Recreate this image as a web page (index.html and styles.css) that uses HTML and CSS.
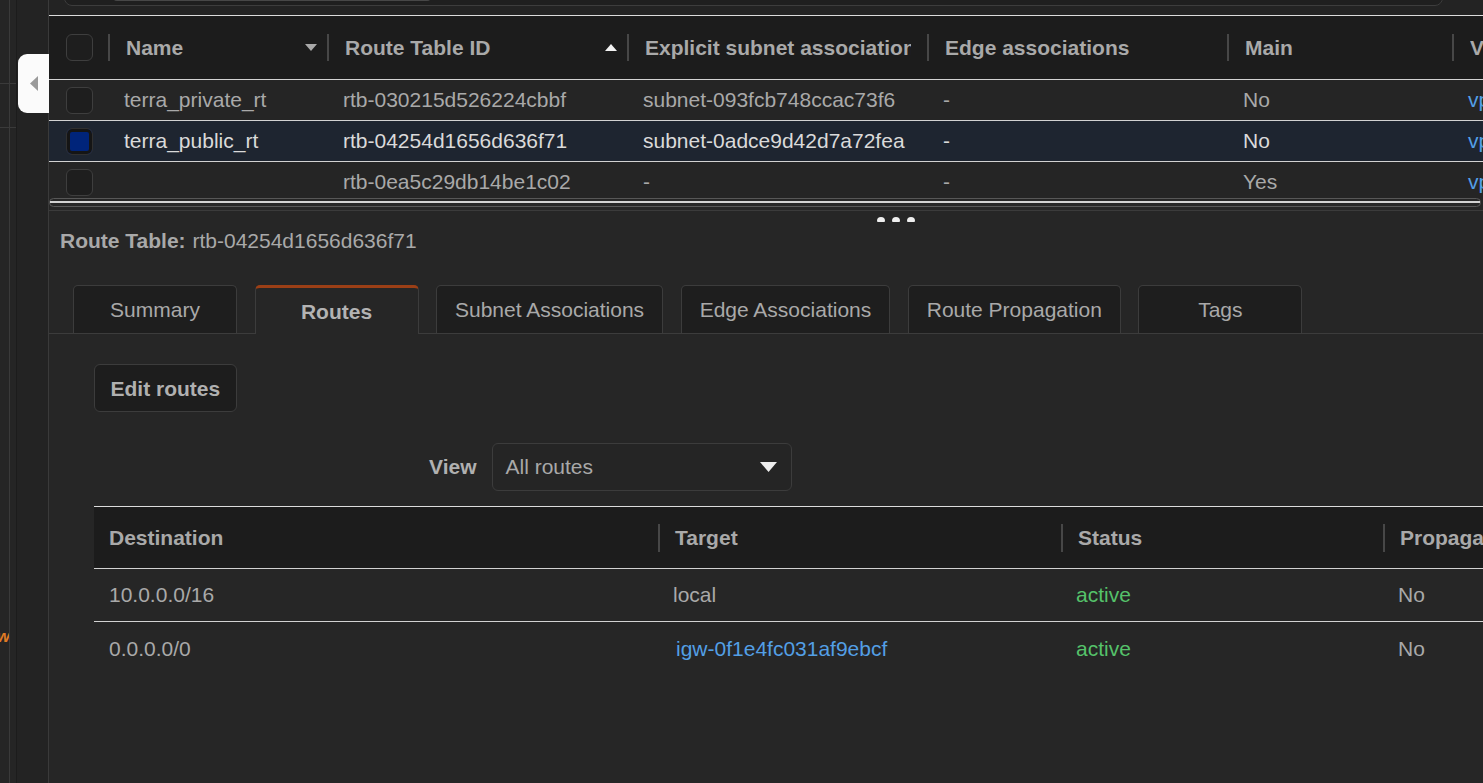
FILE: index.html
```html
<!DOCTYPE html>
<html lang="en">
<head>
<meta charset="utf-8">
<title>Route Tables</title>
<link rel="stylesheet" href="styles.css">
</head>
<body>
<div class="app">
  <aside class="sidebar">
    <div class="side-col">
      <div class="side-seg seg-a"></div>
      <div class="side-seg seg-b"></div>
      <div class="side-new"><span>New</span></div>
    </div>
    <div class="side-rest"></div>
  </aside>
  <button class="collapse" aria-label="Collapse">
    <svg width="8" height="15" viewBox="0 0 8 15"><polygon points="8,0 8,15 0,7.5" fill="#9a9a9a"/></svg>
  </button>

  <main class="main">
    <div class="filter-area">
      <div class="filter-box"><div class="filter-inner"></div></div>
    </div>

    <div class="grid-wrap">
      <div class="g-row g-head">
        <div class="gcheck"><span class="cb"></span></div>
        <div class="gh sep"><span class="lbl">Name</span>
          <svg class="sort" width="12" height="7" viewBox="0 0 12 7"><polygon points="0,0 12,0 6,7" fill="#a9a9a9"/></svg>
        </div>
        <div class="gh sep"><span class="lbl">Route Table ID</span>
          <svg class="sort" width="12" height="7" viewBox="0 0 12 7"><polygon points="0,7 12,7 6,0" fill="#f2f2f2"/></svg>
        </div>
        <div class="gh sep clip"><span class="lbl">Explicit subnet association</span></div>
        <div class="gh sep"><span class="lbl">Edge associations</span></div>
        <div class="gh sep"><span class="lbl">Main</span></div>
        <div class="gh sep"><span class="lbl">VPC</span></div>
      </div>
      <div class="g-row">
        <div class="gcheck"><span class="cb"></span></div>
        <div class="gc">terra_private_rt</div>
        <div class="gc">rtb-030215d526224cbbf</div>
        <div class="gc">subnet-093fcb748ccac73f6</div>
        <div class="gc">-</div>
        <div class="gc">No</div>
        <div class="gc link">vpc-0d1a27c54b3e9f810</div>
      </div>
      <div class="g-row selected">
        <div class="gcheck"><span class="cb on"></span></div>
        <div class="gc">terra_public_rt</div>
        <div class="gc">rtb-04254d1656d636f71</div>
        <div class="gc">subnet-0adce9d42d7a72fea</div>
        <div class="gc">-</div>
        <div class="gc">No</div>
        <div class="gc link">vpc-0d1a27c54b3e9f810</div>
      </div>
      <div class="g-row">
        <div class="gcheck"><span class="cb"></span></div>
        <div class="gc"></div>
        <div class="gc">rtb-0ea5c29db14be1c02</div>
        <div class="gc">-</div>
        <div class="gc">-</div>
        <div class="gc">Yes</div>
        <div class="gc link">vpc-0d1a27c54b3e9f810</div>
      </div>
    </div>
    <div class="hscroll"><div class="thumb"></div></div>

    <div class="splitter"><span class="dot"></span><span class="dot"></span><span class="dot"></span></div>

    <section class="detail">
      <div class="rt-title"><b>Route Table:</b> rtb-04254d1656d636f71</div>

      <div class="tabs">
        <div class="tab">Summary</div>
        <div class="tab active">Routes</div>
        <div class="tab">Subnet Associations</div>
        <div class="tab">Edge Associations</div>
        <div class="tab">Route Propagation</div>
        <div class="tab">Tags</div>
      </div>

      <div class="tab-body">
        <button class="btn">Edit routes</button>

        <div class="view-row">
          <span class="view-label">View</span>
          <div class="select">
            <span>All routes</span>
            <svg width="17" height="10" viewBox="0 0 17 10"><polygon points="0,0 17,0 8.5,10" fill="#eeeeee"/></svg>
          </div>
        </div>

        <div class="rtable">
          <div class="r-row r-head">
            <div class="rh first">Destination</div>
            <div class="rh sep">Target</div>
            <div class="rh sep">Status</div>
            <div class="rh sep">Propagated</div>
          </div>
          <div class="r-row">
            <div class="rc">10.0.0.0/16</div>
            <div class="rc">local</div>
            <div class="rc ok">active</div>
            <div class="rc">No</div>
          </div>
          <div class="r-row last">
            <div class="rc">0.0.0.0/0</div>
            <div class="rc"><span class="igw">igw-0f1e4fc031af9ebcf</span></div>
            <div class="rc ok">active</div>
            <div class="rc">No</div>
          </div>
        </div>
      </div>
    </section>
  </main>
</div>
</body>
</html>
```

FILE: styles.css
```css
* { box-sizing: border-box; margin: 0; padding: 0; }

html, body {
  width: 1483px;
  height: 783px;
  overflow: hidden;
}

body {
  background: #262626;
  font-family: "Liberation Sans", Arial, sans-serif;
  font-size: 21px;
  color: #a9a9a9;
}

.app {
  display: flex;
  height: 783px;
  position: relative;
}

/* ---------- left sidebar ---------- */
.sidebar {
  width: 48px;
  flex: none;
  display: flex;
  background: #232323;
}

.side-col {
  width: 17px;
  position: relative;
  display: flex;
  flex-direction: column;
  border-right: 1px solid #1c1c1c;
  background: #252525;
}

.side-col::before {
  content: "";
  position: absolute;
  left: 9px;
  top: 0;
  bottom: 0;
  width: 1px;
  background: #3a3a3a;
}

.side-seg { border-bottom: 1px solid #3a3a3a; }
.seg-a { height: 84px; }
.seg-b { height: 44px; }

.side-new {
  width: 10px;
  margin-top: 499px;
  display: flex;
  justify-content: flex-end;
  overflow: hidden;
  white-space: nowrap;
  color: #e07b24;
  font-style: italic;
  font-weight: bold;
  font-size: 17px;
  line-height: 20px;
}

.side-rest { flex: 1; }

.collapse {
  position: absolute;
  left: 18px;
  top: 54px;
  width: 31px;
  height: 59px;
  z-index: 5;
  border: none;
  background: #fbfbfb;
  border-radius: 9px 0 0 9px;
  display: flex;
  align-items: center;
  justify-content: center;
  padding-left: 1px;
}

/* ---------- main ---------- */
.main {
  flex: 1;
  min-width: 0;
  border-left: 1px solid #3a3a3a;
  display: flex;
  flex-direction: column;
  overflow: hidden;
}

.filter-area {
  height: 15px;
  flex: none;
  background: #232323;
  padding: 0 40px 0 15px;
  overflow: hidden;
}

.filter-box {
  height: 36px;
  margin-top: -30px;
  border: 1px solid #3d3d3d;
  border-radius: 8px;
  background: #1f1f1f;
  padding-left: 48px;
  display: flex;
}

.filter-inner {
  width: 318px;
  height: 30px;
  background: #2b2b2b;
  border-bottom: 1px solid #474747;
  border-radius: 0 0 4px 4px;
}

/* upper grid */
.grid-wrap {
  height: 183px;
  flex: none;
  overflow: hidden;
  border-top: 1px solid #dcdcdc;
}

.g-row {
  display: grid;
  grid-template-columns: 59px 219px 300px 300px 300px 225px 300px;
  height: 41px;
  border-bottom: 1px solid #d2d2d2;
  background: #252525;
}

.g-row.g-head {
  height: 64px;
  background: #1c1c1c;
}

.g-row.selected {
  background: #1e2530;
  color: #dadada;
}

.gcheck {
  display: flex;
  align-items: center;
  justify-content: center;
  padding-left: 1px;
}

.cb {
  width: 27px;
  height: 27px;
  border: 1px solid #3e3e3e;
  border-radius: 6px;
  background: #1e1e1e;
}

.cb.on {
  background: #00247a;
  border: 1px solid #303030;
  box-shadow: inset 0 0 0 3px #151515;
}

.gh {
  position: relative;
  display: flex;
  align-items: center;
  padding: 0 10px 0 18px;
  font-weight: bold;
  min-width: 0;
  white-space: nowrap;
}

.gh.clip { padding-right: 16px; }

.gh.sep::before {
  content: "";
  position: absolute;
  left: 0;
  top: 18px;
  width: 2px;
  height: 27px;
  background: #474747;
}

.gh .lbl {
  flex: 1;
  min-width: 0;
  overflow: hidden;
}

.gh .sort { flex: none; margin-left: 6px; }

.gc {
  display: flex;
  align-items: center;
  padding-left: 16px;
  white-space: nowrap;
  overflow: hidden;
}

.gc.link { color: #539fe5; }

.hscroll {
  height: 9px;
  flex: none;
  margin-right: 2px;
  border: 1px solid #575757;
  border-radius: 5px;
  padding-top: 2px;
  display: flex;
  align-items: flex-start;
}

.hscroll .thumb {
  flex: 1;
  height: 2px;
  background: #d2d2d2;
}

.splitter {
  margin-top: 3px;
  height: 13px;
  flex: none;
  border-top: 1px solid #3b3b3b;
  display: flex;
  gap: 7px;
  padding: 6px 0 0 828px;
}

.dot {
  width: 8px;
  height: 5px;
  background: #eeeeee;
  border-radius: 4px 4px 1px 1px;
}

/* ---------- detail ---------- */
.detail {
  flex: 1;
  display: flex;
  flex-direction: column;
}

.rt-title {
  padding-left: 11px;
  margin-top: 6px;
  line-height: 24px;
}

.rt-title b { margin-right: 1px; }

.tabs {
  display: flex;
  align-items: flex-end;
  gap: 17.5px;
  margin-top: 32px;
  padding-left: 24px;
  height: 49px;
  border-bottom: 1px solid #3c3c3c;
}

.tab {
  height: 48px;
  min-width: 164px;
  padding: 0 18px;
  border: 1px solid #3c3c3c;
  border-bottom: none;
  border-radius: 5px 5px 0 0;
  background: #1e1e1e;
  display: flex;
  align-items: center;
  justify-content: center;
  white-space: nowrap;
}

.tab.active {
  height: 49px;
  margin-bottom: -1px;
  background: #262626;
  border-top: 3px solid #9b3f16;
  font-weight: bold;
  color: #b3b3b3;
  padding-top: 1px;
}

.tab-body {
  padding: 30px 0 0 45px;
  display: flex;
  flex-direction: column;
  align-items: flex-start;
}

.btn {
  height: 48px;
  padding: 0 15.5px;
  border: 1px solid #3c3c3c;
  border-radius: 6px;
  background: #1d1d1d;
  font-family: "Liberation Sans", Arial, sans-serif;
  font-size: 21px;
  font-weight: bold;
  color: #b0b0b0;
  padding-top: 1px;
}

.view-row {
  display: flex;
  align-items: center;
  margin-top: 31px;
  padding-left: 335px;
}

.view-label {
  font-weight: bold;
  color: #b0b0b0;
  margin-right: 16px;
}

.select {
  width: 300px;
  height: 48px;
  border: 1px solid #3c3c3c;
  border-radius: 6px;
  background: #252525;
  display: flex;
  align-items: center;
  justify-content: space-between;
  padding: 0 14px 0 12px;
}

.rtable {
  margin-top: 15px;
  border-top: 1px solid #dcdcdc;
  align-self: stretch;
}

.r-row {
  display: grid;
  grid-template-columns: 564px 403px 322px 300px;
  height: 53px;
  border-bottom: 1px solid #d2d2d2;
}

.r-row.last { border-bottom: none; }

.r-row.r-head {
  height: 62px;
  background: #1c1c1c;
}

.rh {
  position: relative;
  display: flex;
  align-items: center;
  padding-left: 17px;
  font-weight: bold;
  white-space: nowrap;
}

.rh.first { padding-left: 15px; }

.rh.sep::before {
  content: "";
  position: absolute;
  left: 0;
  top: 17px;
  width: 2px;
  height: 28px;
  background: #474747;
}

.rc {
  display: flex;
  align-items: center;
  padding-left: 15px;
  white-space: nowrap;
}

.rc.ok { color: #55c26a; }

.igw {
  color: #539fe5;
  margin-left: 3px;
}
```
